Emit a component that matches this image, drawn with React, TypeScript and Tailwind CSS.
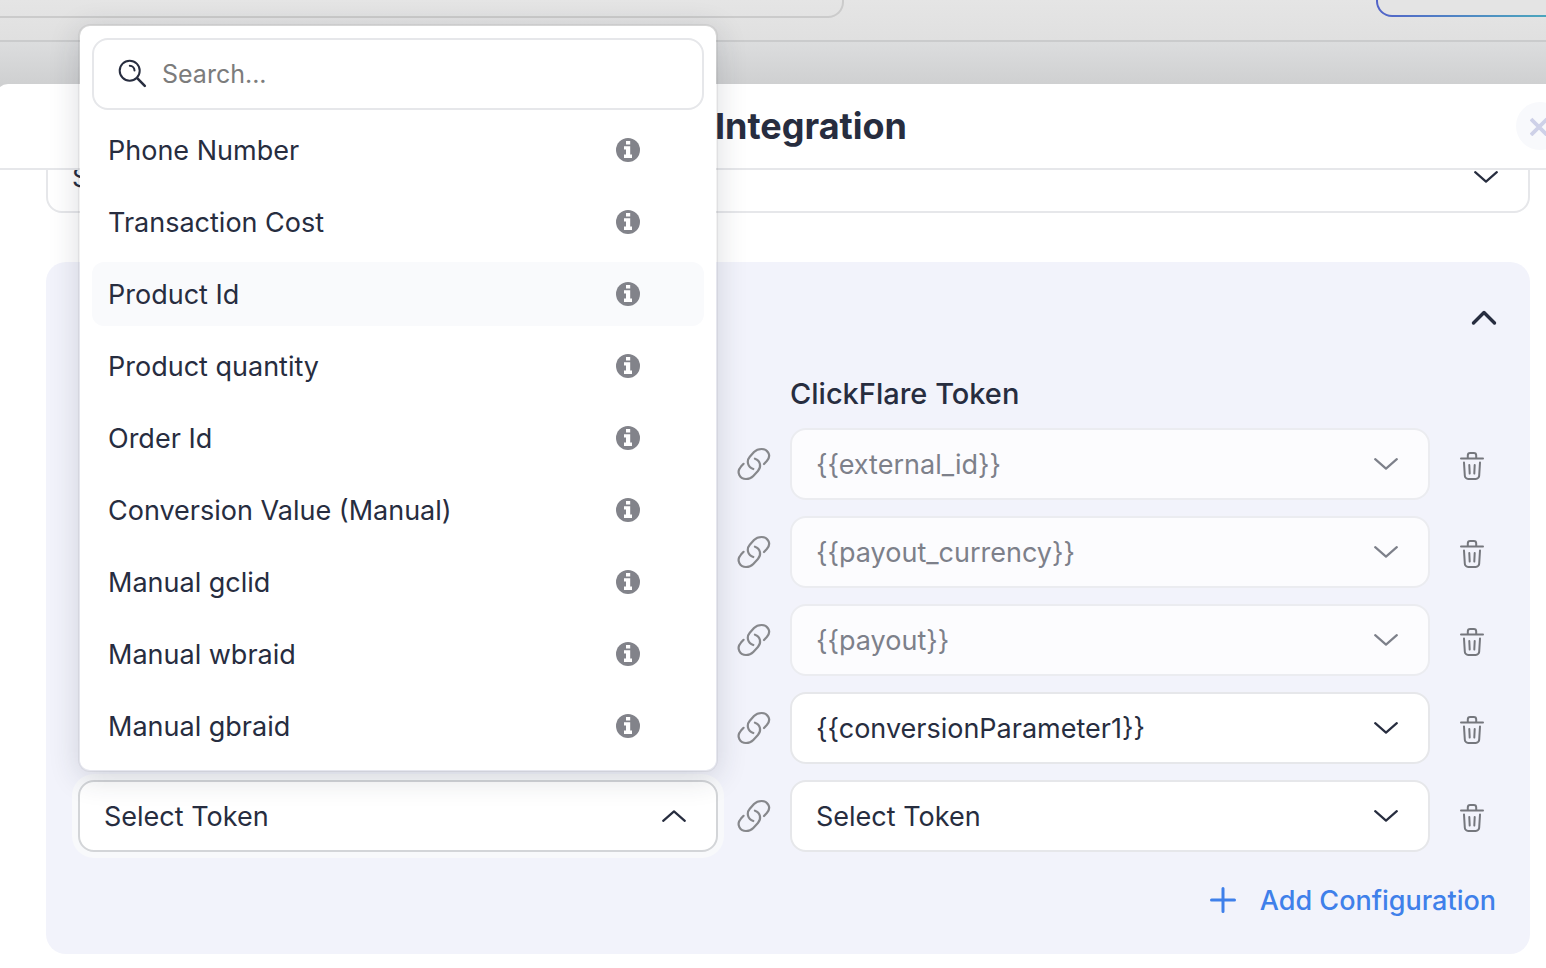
const tokenOptions = [
  'Phone Number',
  'Transaction Cost',
  'Product Id',
  'Product quantity',
  'Order Id',
  'Conversion Value (Manual)',
  'Manual gclid',
  'Manual wbraid',
  'Manual gbraid',
];

const rows = [
  { token: '{{external_id}}', disabled: true },
  { token: '{{payout_currency}}', disabled: true },
  { token: '{{payout}}', disabled: true },
  { token: '{{conversionParameter1}}', disabled: false },
  { token: 'Select Token', disabled: false },
];

const ChevronIcon = ({ className = '' }: { className?: string }) => (
  <svg viewBox="0 0 24 12" fill="none" stroke="currentColor" strokeWidth="2.2" strokeLinecap="round" strokeLinejoin="round" className={`h-3 w-6 ${className}`}>
    <path d="M1.2 1.2L12 10.6 22.8 1.2" />
  </svg>
);

const SearchIcon = () => (
  <svg viewBox="0 0 30 30" fill="none" stroke="currentColor" strokeWidth="2" strokeLinecap="round" className="size-[30px] shrink-0">
    <circle cx="11.7" cy="11.7" r="10" />
    <path d="M11.8 6.8a4.9 4.9 0 0 1 4.7 4.8" />
    <path d="M19.2 19.2l7.6 7.6" strokeWidth="2.6" />
  </svg>
);

const InfoIcon = () => (
  <svg viewBox="0 0 24 24" className="size-6 text-[#82838a]" aria-hidden="true">
    <circle cx="12" cy="12" r="12" fill="currentColor" />
    <path d="M10 3h4.2v3.4H10zM8 8.2h6.2v8.4H16V20H8v-3.4h2v-5H8z" fill="#fff" />
  </svg>
);

const LinkIcon = () => (
  <svg viewBox="0 0 38 38" fill="none" stroke="currentColor" strokeWidth="2.2" strokeLinecap="round" strokeLinejoin="round" className="size-[38px]">
    <path d="M29 19l2.8-3C37.5 9.5 31.5 4 26.7 4c-3.200 0-5.500.7-7.700 3l-4.200 4.800c-3.600 4.200-2.200 10.200 3.500 12.200" />
    <path d="M8.600 18.800l-2.600 2.800C.4 28 5.700 34 11 34c3 0 5.200-.800 7.300-3l4.600-5c3.800-4.200 2.600-10.300-3-12.300" />
  </svg>
);

const TrashIcon = () => (
  <svg viewBox="0 0 24 32" fill="none" stroke="currentColor" strokeWidth="2" strokeLinecap="round" strokeLinejoin="round" className="h-8 w-6">
    <path d="M1 10.4h22" />
    <path d="M7.8 10v-2.6a2.4 2.4 0 0 1 2.4-2.4h3.6a2.4 2.4 0 0 1 2.4 2.4V10" />
    <path d="M4 14.5l.8 13a3.4 3.4 0 0 0 3.400 3.400h7.600a3.400 3.400 0 0 0 3.400-3.400l.8-13" />
    <path d="M9.3 17l.4 8.600M14.700 17l-.4 8.600" />
  </svg>
);

const TokenSelect = ({ value, label, disabled = false }: { value: string; label: string; disabled?: boolean }) => (
  <div className={`relative w-full ${disabled ? 'text-[#7d808a]' : 'text-[#272d3f]'}`}>
    <select
      aria-label={label}
      defaultValue={value}
      disabled={disabled}
      className="h-[72px] w-full appearance-none rounded-2xl border-2 border-[#e6e7ea] bg-white px-6 pt-0.5 text-[27px] disabled:border-[#ebecf0] disabled:bg-[#fcfcfe] disabled:opacity-100"
    >
      <option>{value}</option>
    </select>
    <ChevronIcon className="pointer-events-none absolute top-[30px] right-8" />
  </div>
);

const TokenMenu = () => (
  <div className="absolute inset-x-0 bottom-full z-10 mb-2 rounded-xl border-2 border-black/5 bg-white bg-clip-padding p-3 shadow-[0_6px_30px_rgba(40,45,60,0.16)]">
    <label className="flex h-[72px] items-center gap-3.5 rounded-2xl border-2 border-[#e6e7ea] px-6">
      <SearchIcon />
      <input
        type="text"
        aria-label="Search tokens"
        placeholder="Search..."
        className="min-w-0 flex-1 bg-transparent pt-0.5 text-[25px] outline-none placeholder:text-[#7c7c7c]"
      />
    </label>
    <ul role="listbox" aria-label="Tokens" className="mt-2 flex flex-col gap-2">
      {tokenOptions.map((option) => (
        <li
          key={option}
          role="option"
          aria-selected={option === 'Product Id'}
          className="flex h-16 items-center justify-between rounded-xl pr-16 pl-4 text-[27px] aria-selected:bg-[#f9fafc]"
        >
          <span className="pt-0.5">{option}</span>
          <InfoIcon />
        </li>
      ))}
    </ul>
  </div>
);

const App = () => {
  return (
    <div className="min-h-screen overflow-hidden bg-white font-['Inter','Liberation_Sans',sans-serif] text-[#272d3f]">
      {/* dimmed page behind the modal */}
      <div className="flex h-[42px] items-start justify-between border-b-2 border-[#cacbcc] bg-linear-to-b from-[#e5e5e5] to-[#e0e0e0]">
        <div className="h-[18px] w-[844px] rounded-br-2xl border-r-2 border-b-2 border-[#cbcbcb]" />
        <div className="h-[17px] w-[170px] rounded-bl-2xl bg-linear-to-r from-[#5263c8] to-[#4ba6bd] pb-0.5 pl-0.5">
          <div className="h-full rounded-bl-[14px] bg-[#e4e4e4]" />
        </div>
      </div>
      <div className="bg-linear-to-b from-[#dcddde] from-0% to-[#cfd0d1] to-[42px] pt-[42px]">
        <main className="-mr-12 -ml-1 rounded-tl-xl bg-white">
          <header className="flex h-[86px] items-center border-b-2 border-[#e6e7ea] pr-[30px]">
            <h1 className="flex-1 pl-[110px] text-center text-[36px] font-bold">Integration</h1>
            <button type="button" aria-label="Close" className="flex size-12 items-center justify-center rounded-full bg-[#f8f9fc] text-[#ced1e8]">
              <svg viewBox="0 0 20 20" fill="none" stroke="currentColor" strokeWidth="3.8" className="size-5">
                <path d="M1 3l16 16M17 3L1 19" />
              </svg>
            </button>
          </header>

          <div className="pr-16 pb-3.5 pl-[50px]">
            {/* scrolled field, only its lower part shows */}
            <div className="flex h-[43px] items-end overflow-hidden">
              <TokenSelect value="Select" label="Event" />
            </div>

            <section className="mt-[49px] rounded-[20px] bg-[#f2f3fb] px-8 pt-10 pb-[34px]">
              <div className="flex h-8 items-center justify-end">
                <button type="button" aria-label="Collapse section" className="flex size-7 items-center justify-center">
                  <svg viewBox="0 0 28 18" fill="none" stroke="currentColor" strokeWidth="3.4" strokeLinecap="round" strokeLinejoin="round" className="h-[18px] w-7">
                    <path d="M3.5 14L14 3.500l10.500 10.500" />
                  </svg>
                </button>
              </div>

              <div className="mt-10 grid grid-cols-[1fr_72px_1fr_68px] gap-y-4">
                <h2 className="col-start-3 -mb-0.5 h-10 text-[29px] leading-10 font-medium">ClickFlare Token</h2>
                {rows.map((row, index) => (
                  <div key={index} className="col-span-4 grid grid-cols-subgrid items-center">
                    {index === rows.length - 1 ? (
                      <div className="relative">
                        <button
                          type="button"
                          aria-haspopup="listbox"
                          aria-expanded="true"
                          className="flex h-[72px] w-full items-center justify-between rounded-2xl border-2 border-[#d3d5d8] bg-white pr-[30px] pl-6 text-[27px] ring-6 ring-[#f8f9fb]"
                        >
                          <span className="pt-0.5">Select Token</span>
                          <ChevronIcon className="rotate-180" />
                        </button>
                        <TokenMenu />
                      </div>
                    ) : (
                      <div />
                    )}
                    <div className="flex justify-center text-[#87888c]">
                      <LinkIcon />
                    </div>
                    <TokenSelect value={row.token} label={`ClickFlare token ${index + 1}`} disabled={row.disabled} />
                    <button type="button" aria-label={`Delete row ${index + 1}`} className="flex justify-end pr-3.5 text-[#75777d]">
                      <TrashIcon />
                    </button>
                  </div>
                ))}
              </div>

              <div className="mt-7 flex justify-end">
                <button type="button" className="flex h-10 items-center gap-6 pr-0.5 text-[27px] font-medium text-[#3f80ea]">
                  <svg viewBox="0 0 26 26" fill="none" stroke="currentColor" strokeWidth="3" strokeLinecap="round" className="size-[26px]">
                    <path d="M13 1.500v23M1.500 13h23" />
                  </svg>
                  <span className="pt-0.5">Add Configuration</span>
                </button>
              </div>
            </section>
          </div>
        </main>
      </div>
    </div>
  );
};

export default App;
